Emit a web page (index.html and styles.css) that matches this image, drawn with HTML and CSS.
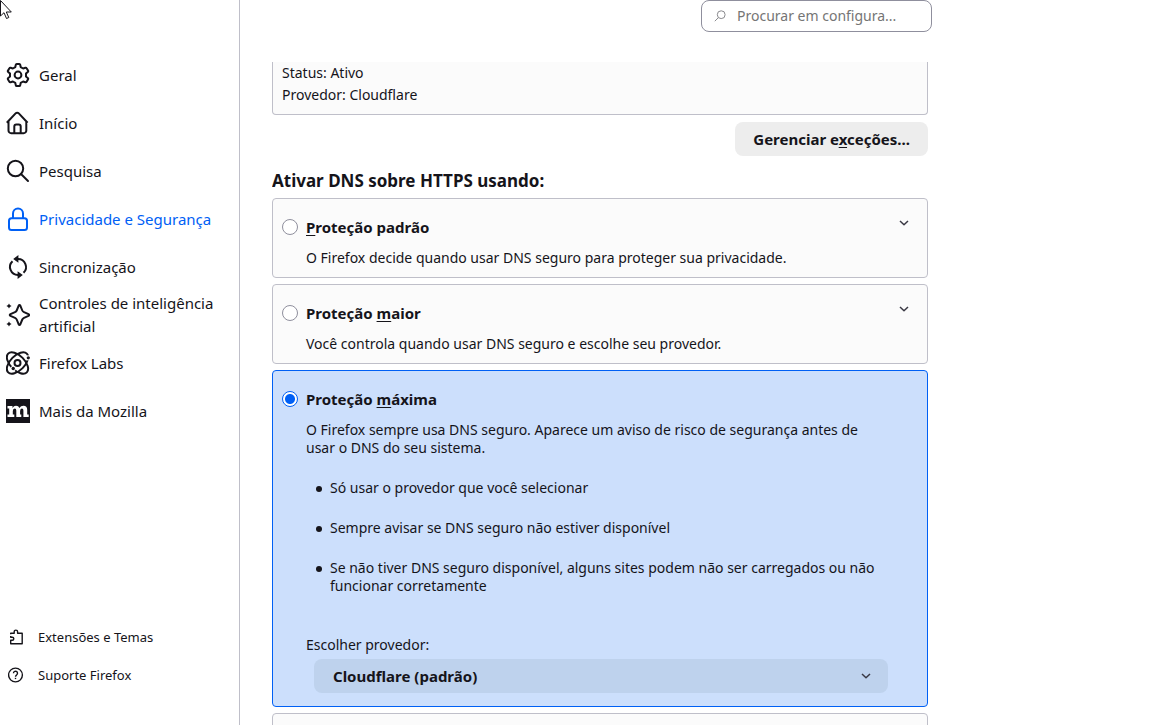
FILE: index.html
```html
<!DOCTYPE html>
<html lang="pt-BR">
<head>
<meta charset="utf-8">
<title>Configurações</title>
<link rel="stylesheet" href="styles.css">
</head>
<body>
<div class="page">
  <aside class="sidebar">
    <nav class="nav">
      <a class="nav-item" href="#geral">
        <svg class="icon" viewBox="0 0 24 24"><circle cx="12" cy="12" r="3.400"/><path d="M10.800 1h2.400a1 1 0 0 1 1 .8l.5 2.300 2.400 1.400 2.300-.7a1 1 0 0 1 1.200.5l1.400 2.300a1 1 0 0 1-.2 1.300L20 10.600v2.800l1.800 1.700a1 1 0 0 1 .2 1.300l-1.400 2.300a1 1 0 0 1-1.200.5l-2.300-.7-2.400 1.400-.5 2.300a1 1 0 0 1-1 .8h-2.400a1 1 0 0 1-1-.8l-.5-2.300-2.400-1.400-2.300.7a1 1 0 0 1-1.200-.5L2 16.400a1 1 0 0 1 .2-1.300L4 13.400v-2.800L2.200 8.900A1 1 0 0 1 2 7.600l1.400-2.300a1 1 0 0 1 1.200-.5l2.300.7 2.400-1.400.5-2.300a1 1 0 0 1 1-.8z"/></svg>
        <span>Geral</span></a>
      <a class="nav-item" href="#inicio">
        <svg class="icon" viewBox="0 0 24 24"><path d="M.8 11.800 9.600 2.400a2.200 2.200 0 0 1 3.200 0l8.800 9.400M2.500 10.500v9a2.700 2.700 0 0 0 2.700 2.700h12.400a2.700 2.700 0 0 0 2.700-2.700v-9M8.300 22v-6.500a2 2 0 0 1 2-2h2.400a2 2 0 0 1 2 2V22"/></svg>
        <span>Início</span></a>
      <a class="nav-item" href="#pesquisa">
        <svg class="icon" viewBox="0 0 24 24"><circle cx="9.500" cy="9.500" r="7.700"/><path d="m15 15 7 7" stroke-linecap="round"/></svg>
        <span>Pesquisa</span></a>
      <a class="nav-item selected" href="#privacidade" aria-current="page">
        <svg class="icon" viewBox="0 0 24 24"><rect x="3" y="11.200" width="18" height="11.800" rx="2.500"/><path d="M7 11V6.500a5 5 0 0 1 10 0V11"/></svg>
        <span>Privacidade e Segurança</span></a>
      <a class="nav-item" href="#sync">
        <svg class="icon" viewBox="0 0 24 24"><path d="M11 4h1a8 8 0 0 1 5.500 13.800M13 20h-1A8 8 0 0 1 6.500 6.200"/><path class="solid" d="M12.400 0v7.800L7.200 3.900zM11.600 16.200V24l5.200-3.900z"/></svg>
        <span>Sincronização</span></a>
      <a class="nav-item" href="#ia">
        <svg class="icon" viewBox="0 0 24 24"><path d="M12.600 2.800q.9-1.600 1.800 0l1.900 4.700q.5 1.200 1.700 1.700l4.500 1.900q1.500.9 0 1.800L18 14.800q-1.200.5-1.700 1.700l-1.900 4.700q-.9 1.600-1.800 0l-1.900-4.700q-.5-1.200-1.700-1.700l-4.500-1.900q-1.500-.9 0-1.800L9 9.200q1.200-.5 1.700-1.700z"/><path class="solid" d="m3 .4.900 1.700 1.700.9-1.700.9L3 5.600l-.9-1.700L.4 3l1.700-.9zM3 18.400l.9 1.700 1.700.9-1.700.9L3 23.600l-.9-1.700L.4 21l1.700-.9z"/></svg>
        <span>Controles de inteligência artificial</span></a>
      <a class="nav-item" href="#labs">
        <svg class="icon" viewBox="0 0 24 24"><g transform="translate(11.500 12)"><ellipse rx="13.200" ry="7.200" transform="rotate(45)"/><ellipse rx="13.200" ry="7.200" transform="rotate(-45)"/><circle r="3"/></g><circle class="gap" cx="22" cy="6.800" r="2.600"/><circle class="solid" cx="22.300" cy="6.800" r="1.600"/><circle class="gap" cx="7.200" cy="17.500" r="2.600"/><circle class="solid" cx="7.200" cy="17.500" r="1.700"/></svg>
        <span>Firefox Labs</span></a>
      <a class="nav-item" href="#mozilla">
        <svg class="icon" viewBox="0 0 24 24"><path class="solid" d="M0 0h24v24H0z"/><path class="mark" d="M1.500 7h5v2Q7.700 6.700 10 6.700q2.600 0 3.400 2.300 1.300-2.300 4-2.300 3.800 0 3.800 4v4.900h1.500V18h-5.300v-6.600q0-2-1.500-2-1.800 0-1.800 2.600v3.600h1.200V18h-5v-6.600q0-2-1.500-2-2 0-2 2.600v3.600h1.500V18H1.500v-2.400h1.700V9.400H1.500z"/></svg>
        <span>Mais da Mozilla</span></a>
    </nav>
    <nav class="nav-footer">
      <a class="foot-item" href="#extensoes">
        <svg class="icon-small" viewBox="0 0 16 16"><path d="M2.700 5.300V4.200h3.500V2.800a1.700 1.700 0 0 1 3.400 0v1.400h4.600v10.600H2.700v-3.600h1.600a1.500 1.500 0 0 0 0-3H2.700V7"/></svg>
        <span>Extensões e Temas</span></a>
      <a class="foot-item" href="#suporte">
        <svg class="icon-small" viewBox="0 0 16 16"><circle cx="7.500" cy="8" r="6.900"/><path d="M5.500 6.300a2 2 0 1 1 3.200 1.500q-1.200.8-1.200 1.900"/><path d="M7.500 10.800v1.300"/></svg>
        <span>Suporte Firefox</span></a>
    </nav>
  </aside>

  <main class="main">
    <header class="top">
      <label class="search">
        <svg class="search-icon" viewBox="0 0 12 12"><circle cx="7.200" cy="4.700" r="3.900"/><path d="M4.400 7.600.8 11.200"/></svg>
        <input type="search" placeholder="Procurar em configura..." aria-label="Procurar em configurações">
      </label>
    </header>
    <div class="content">
      <section class="status">
        <p>Status: Ativo</p>
        <p>Provedor: Cloudflare</p>
      </section>
      <button class="exceptions" type="button">Gerenciar e<u>x</u>ceções...</button>
      <h2 class="heading">Ativar DNS sobre HTTPS usando:</h2>
      <div class="cards">
        <section class="card">
          <input type="radio" name="doh" id="doh-default">
          <label class="card-title" for="doh-default"><u>P</u>roteção padrão</label>
          <button class="expand" type="button" aria-label="Expandir proteção padrão"><svg class="chevron" viewBox="0 0 10 6"><path d="m1 1 4 3.800L9 1"/></svg></button>
          <div class="card-body"><p>O Firefox decide quando usar DNS seguro para proteger sua privacidade.</p></div>
        </section>
        <section class="card">
          <input type="radio" name="doh" id="doh-more">
          <label class="card-title" for="doh-more">Proteção <u>m</u>aior</label>
          <button class="expand" type="button" aria-label="Expandir proteção maior"><svg class="chevron" viewBox="0 0 10 6"><path d="m1 1 4 3.800L9 1"/></svg></button>
          <div class="card-body"><p>Você controla quando usar DNS seguro e escolhe seu provedor.</p></div>
        </section>
        <section class="card active">
          <input type="radio" name="doh" id="doh-max" checked>
          <label class="card-title" for="doh-max">Proteção <u>m</u>áxima</label>
          <div class="card-body">
            <p>O Firefox sempre usa DNS seguro. Aparece um aviso de risco de segurança antes de usar o DNS do seu sistema.</p>
            <ul class="points">
              <li>Só usar o provedor que você selecionar</li>
              <li>Sempre avisar se DNS seguro não estiver disponível</li>
              <li>Se não tiver DNS seguro disponível, alguns sites podem não ser carregados ou não funcionar corretamente</li>
            </ul>
            <label class="provider-label" for="provider">Escolher provedor:</label>
            <div class="provider">
              <select id="provider"><option>Cloudflare (padrão)</option></select>
              <svg class="chevron" viewBox="0 0 10 6"><path d="m1 1 4 3.800L9 1"/></svg>
            </div>
          </div>
        </section>
        <section class="card"></section>
      </div>
    </div>
  </main>
</div>
<svg class="pointer" viewBox="0 0 13 20"><path d="M.5.500v15.500l3.500-3.300 2.500 5.800 2.300-1-2.500-5.500h5z"/></svg>
</body>
</html>
```
FILE: styles.css
```css
* { box-sizing: border-box; }

body {
  margin: 0;
  background: #fff;
  color: #15141a;
  font-family: "Noto Sans", "DejaVu Sans", sans-serif;
  font-size: 14px;
  line-height: 22px;
}

p, h2, ul { margin: 0; padding: 0; }
u { text-underline-offset: 2px; }

.page {
  display: flex;
  height: 100vh;
  overflow: hidden;
}

.sidebar {
  flex: 0 0 240px;
  display: flex;
  flex-direction: column;
  justify-content: space-between;
  padding: 51px 20px 31px 6px;
  border-right: 1px solid #bfbfc9;
}

.nav-item, .foot-item {
  display: flex;
  align-items: center;
  color: inherit;
  text-decoration: none;
}
.nav-item {
  height: 48px;
  gap: 9px;
  font-size: 15px;
  line-height: 23px;
}
.nav-item.selected { color: #0060f5; }

.foot-item {
  height: 38px;
  gap: 14px;
  padding-left: 2px;
  font-size: 13px;
}

.icon, .icon-small, .search-icon, .chevron {
  flex: none;
  fill: none;
  stroke: currentColor;
  stroke-linejoin: round;
}
.icon { width: 24px; height: 24px; stroke-width: 2; }
.icon-small { width: 16px; height: 16px; stroke-width: 1.4; }
.icon .solid { fill: currentColor; stroke: none; }
.icon .mark, .icon .gap { fill: #fff; stroke: none; }
.chevron { width: 10px; height: 6px; stroke: #3a3944; stroke-width: 1.5; }

.main {
  flex: 1;
  min-width: 0;
  display: flex;
  flex-direction: column;
  padding: 0 32px;
}

.top {
  flex: none;
  display: flex;
  justify-content: flex-end;
  max-width: 660px;
  padding-bottom: 30px;
}

.search {
  display: flex;
  align-items: center;
  gap: 11px;
  width: 231px;
  height: 32px;
  padding: 0 13px 0 12px;
  border: 1px solid #8f8f9d;
  border-radius: 8px;
}
.search-icon { width: 12px; height: 12px; stroke: #8a8a8e; }
.search input {
  flex: 1;
  min-width: 0;
  padding: 0;
  border: 0;
  outline: 0;
  background: none;
  font: inherit;
}
.search input::placeholder { color: #757575; opacity: 1; }

.content {
  flex: 1;
  min-height: 0;
  max-width: 656px;
  overflow: hidden;
}

.status {
  padding: 0 9px 8px;
  border: 1px solid #bfbfc9;
  border-top: 0;
  border-radius: 0 0 4px 4px;
  background: #fbfbfb;
}

.exceptions {
  display: block;
  height: 34px;
  margin: 7px 0 14px auto;
  padding: 0 18px;
  border: 0;
  border-radius: 8px;
  background: #ededed;
  color: inherit;
  font: inherit;
  font-size: 15px;
  font-weight: 700;
}

.heading {
  margin-bottom: 6px;
  font-size: 17px;
  line-height: 22px;
}

.cards {
  display: flex;
  flex-direction: column;
  gap: 6px;
}

.card {
  display: grid;
  grid-template-columns: 16px 1fr 16px;
  column-gap: 8px;
  row-gap: 11px;
  padding: 17px 15px 10px 9px;
  border: 1px solid #bfbfc9;
  border-radius: 4px;
  background: #fbfbfb;
}
.card.active {
  border-color: #0060f5;
  background: #ccdffc;
}
.card input {
  appearance: none;
  width: 16px;
  height: 16px;
  margin: 0;
  align-self: center;
  border: 1px solid #8f8f9d;
  border-radius: 50%;
  background: #fff;
}
.card input:checked {
  border-color: #0060f5;
  background: radial-gradient(circle, #0060f5 4.5px, #fff 5.5px);
}
.card-title {
  font-size: 15px;
  font-weight: 700;
}
.expand {
  display: grid;
  place-items: center;
  width: 16px;
  height: 14px;
  padding: 0;
  border: 0;
  background: none;
}
.card-body {
  grid-column: 2 / -1;
  line-height: 18px;
}
.active .card-body { padding: 0 24px 3px 0; }

.points {
  display: flex;
  flex-direction: column;
  gap: 22px;
  margin: 22px 0 39px;
  padding-left: 10px;
  list-style: none;
}
.points li {
  display: flex;
  gap: 8px;
}
.points li::before {
  content: "";
  flex: none;
  width: 6px;
  height: 6px;
  margin-top: 7px;
  border-radius: 50%;
  background: currentColor;
}

.provider-label {
  display: block;
  line-height: 22px;
}
.provider {
  display: grid;
  align-items: center;
  margin: 3px 0 0 8px;
}
.provider > * { grid-area: 1 / 1; }
.provider .chevron { justify-self: end; margin-right: 17px; pointer-events: none; }
.provider select {
  appearance: none;
  width: 100%;
  height: 34px;
  padding: 0 19px;
  border: 0;
  border-radius: 8px;
  background: #bed2ed;
  color: inherit;
  font: inherit;
  font-size: 15px;
  font-weight: 700;
}

.pointer {
  position: absolute;
  top: 0;
  left: 0;
  width: 13px;
  height: 20px;
  fill: #fff;
  stroke: #15141a;
}
```
